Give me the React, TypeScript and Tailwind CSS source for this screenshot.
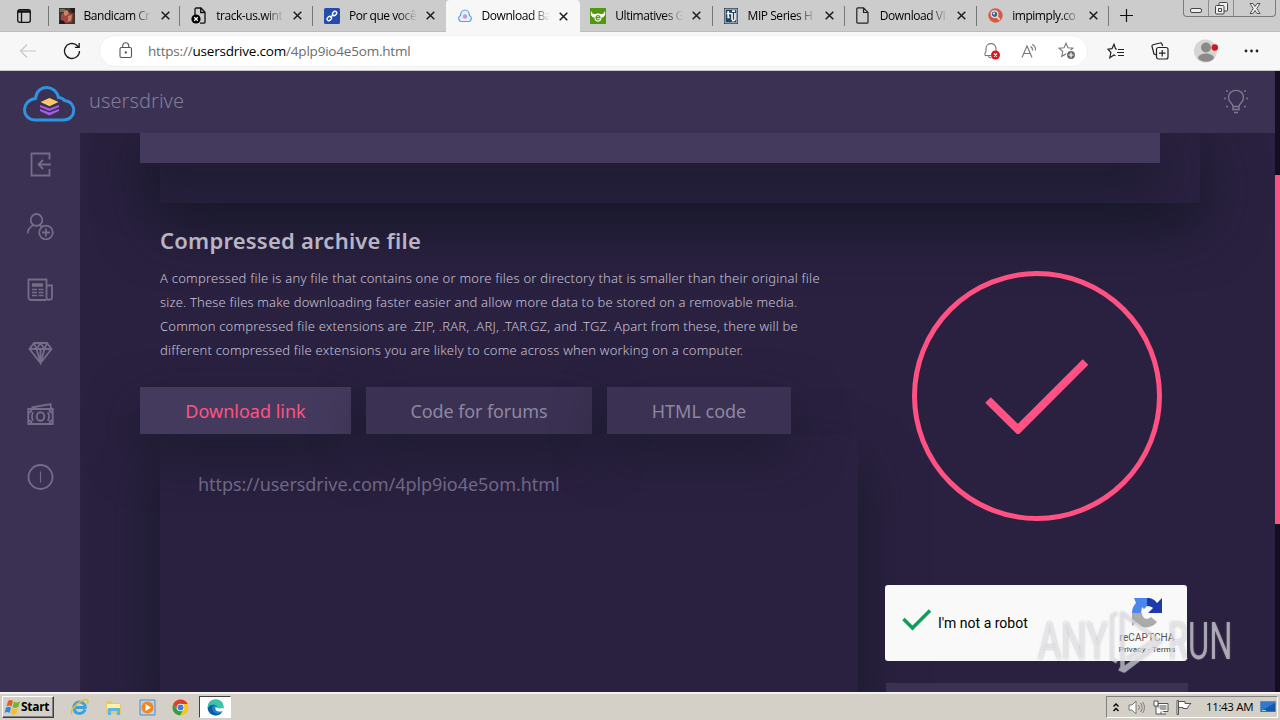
import type { ReactNode } from 'react';

const Close = () => (
  <svg className="shrink-0" width="9" height="9" viewBox="0 0 9 9" fill="none" stroke="#1c1c1c" strokeWidth="1.5">
    <path d="M.7.7l7.6 7.6M8.3.7L.7 8.3" />
  </svg>
);

const icons: Record<string, ReactNode> = {
  bandicam: (
    <svg width="16" height="16" viewBox="0 0 16 16">
      <path fill="#40352b" d="M0 0h16v16H0z" />
      <path fill="#6b7450" d="M1 1h5v3H1z" />
      <path fill="#a5443f" d="M2 7l4-4 4 2 4 1-1 8-6 1-5-3z" />
      <path fill="#c98070" d="M5 3l3-1 2 3-3 3-2-1zM9 8l4-1-1 5-3 2z" />
      <path fill="#1f1c1b" d="M1 12l4 1 1 3H0zM11 0h5v4l-3 1z" />
    </svg>
  ),
  blocked: (
    <svg width="16" height="18" viewBox="0 0 16 18" fill="none" stroke="#111" strokeWidth="1.3">
      <path d="M4 8V2.2C4 1.5 4.500 1 5.200 1H10l4 4.200V15c0 .8-.4 1.200-1.200 1.200H9M9.700 1v4.500H14" />
      <circle cx="5" cy="12" r="4.600" fill="#000" stroke="none" />
      <path stroke="#fff" d="M3.200 10.200l3.600 3.600M6.800 10.200l-3.600 3.600" />
    </svg>
  ),
  link: (
    <svg width="16" height="16" viewBox="0 0 16 16" fill="none" stroke="#fff" strokeWidth="1.300">
      <rect width="16" height="16" rx="1.500" fill="#244cab" stroke="none" />
      <ellipse cx="5.300" cy="10.500" rx="2.500" ry="1.800" transform="rotate(-45 5.300 10.500)" />
      <ellipse cx="10.500" cy="5.500" rx="2.500" ry="1.800" transform="rotate(-45 10.500 5.500)" />
      <path d="M6.300 9.500l3.200-3" />
    </svg>
  ),
  cloud: (
    <svg width="14" height="14" viewBox="0 0 14 14" fill="#e6f0fa" stroke="#5d9fd8" strokeWidth="1.200">
      <path d="M3.200 12.500C.2 12.300-.1 7.500 2.500 6.500 2.600 2.800 5 1 7 1s4.400 1.800 4.500 5.500c2.600 1 2.300 5.800-.7 6z" />
      <circle cx="7" cy="7.500" r="2.200" fill="#c99bc9" stroke="none" />
    </svg>
  ),
  green: (
    <svg width="16" height="16" viewBox="0 0 16 16">
      <path fill="#4f9a0c" d="M0 0h16v16H0z" />
      <path fill="#fff" d="M1 3l1.500 2.500L5 6.300C6 5.200 10 5.200 11 6.300l2.500-.8L15 3l.2 4-2 2.200-1.700.3c.2 2.500-1 4-3.500 4.300-2.500-.3-3.700-1.800-3.500-4.300l-1.700-.3L.8 7z" />
      <path fill="none" stroke="#4f9a0c" strokeWidth="1.200" d="M6 9.700h4c0-2.700-4-2.700-4 0 0 2.300 2.200 2.500 3.700 1.800" />
    </svg>
  ),
  mip: (
    <svg width="14" height="16" viewBox="0 0 14 16" fill="none" stroke="#f5f7f8" strokeWidth="1.700">
      <path fill="#24425a" stroke="none" d="M0 0h14v16H0z" />
      <path strokeWidth=".7" d="M1.200 1.200h11.600v13.600H1.200z" />
      <path d="M4.200 3v6.500h1.500M2.600 5.500h4.500M8 5v7M11 5v6c0 1.500-2 2-3 1.500M8 3.200h3" />
    </svg>
  ),
  file: (
    <svg width="13" height="17" viewBox="0 0 13 17" fill="none" stroke="#222" strokeWidth="1.200">
      <path d="M.8 1.800c0-.6.400-1 1-1H7.500L12 5.500v9.700c0 .6-.4 1-1 1H1.800c-.6 0-1-.4-1-1zM7.500.8v4.700H12" />
    </svg>
  ),
  search: (
    <svg width="15" height="15" viewBox="0 0 15 15">
      <circle cx="7.500" cy="7.500" r="7.200" fill="#d65a45" />
      <circle cx="6.500" cy="6.200" r="3.300" fill="#34668b" stroke="#f4dfdb" strokeWidth="1.200" />
      <path d="M9 8.800l3 3.200" stroke="#f4dfdb" strokeWidth="1.700" />
      <circle cx="6" cy="5.600" r="1" fill="#fff" />
    </svg>
  ),
};

const tabs = [
  { icon: 'bandicam', title: 'Bandicam Cr' },
  { icon: 'blocked', title: 'track-us.wint' },
  { icon: 'link', title: 'Por que você' },
  { icon: 'cloud', title: 'Download Ba', active: true },
  { icon: 'green', title: 'Ultimatives G' },
  { icon: 'mip', title: 'MIP Series H' },
  { icon: 'file', title: 'Download VI' },
  { icon: 'search', title: 'impimply.co' },
];

function TabStrip() {
  return (
    <div className="flex h-8 shrink-0 items-stretch border-b border-[#bdbdbd] bg-[#cccccc]">
      <div className="flex w-[47.500px] items-center justify-center">
        <svg width="14" height="14" viewBox="0 0 14 14" fill="none" stroke="#111" strokeWidth="1.300">
          <rect x=".7" y=".7" width="12.600" height="12.600" rx="2" />
          <path d="M1 2.500h12" strokeWidth="2.500" />
          <path d="M4.500 3v10" />
        </svg>
      </div>
      {tabs.map((t, i) => (
        <div
          key={t.icon}
          className={
            t.active
              ? 'relative z-10 -mb-px flex w-[134.700px] items-center rounded-t-[4px] bg-[#f7f7f7] pl-[11px]'
              : i > 3
                ? 'relative flex w-[132.300px] items-center pl-[10px]'
                : 'relative flex w-[132.700px] items-center pl-[11px]'
          }
        >
          <span className="flex w-[16px] shrink-0 justify-center">{icons[t.icon]}</span>
          <span className="ml-[9px] w-[68px] overflow-hidden whitespace-nowrap text-[12px] tracking-[-0.450px] text-black [mask-image:linear-gradient(90deg,#000_72%,transparent)]">
            {t.title}
          </span>
          <span className="ml-[9px] flex"><Close /></span>
          {!t.active && i !== 2 && <span className="absolute right-0 top-[6px] h-5 w-px bg-[#777]" />}
          {i === 0 && <span className="absolute left-0 top-[6px] h-5 w-px bg-[#777]" />}
        </div>
      ))}
      <svg className="mt-[8px] ml-[10px]" width="15" height="15" viewBox="0 0 15 15" stroke="#111" strokeWidth="1.200">
        <path d="M7.500 1v13M1 7.500h13" />
      </svg>
      <div className="mr-[4px] ml-auto flex h-[17px] w-[93px] rounded-b-[4px] border border-t-0 border-[#7b7b7b]">
        <div className="flex w-[25px] items-center justify-center border-r border-[#8b8b8b]">
          <span className="mt-[5px] h-[5px] w-3 rounded-[2px] border border-[#444] bg-[#eee]" />
        </div>
        <div className="flex w-[25px] items-center justify-center border-r border-[#8b8b8b]">
          <svg width="13" height="13" viewBox="0 0 13 13" fill="#eee" stroke="#444">
            <rect x="4" y=".5" width="8.500" height="8.500" rx="1" />
            <rect x=".5" y="3.500" width="8.500" height="8.500" rx="1" />
            <path d="M3.500 6.500h3v3h-3z" />
          </svg>
        </div>
        <div className="flex flex-1 items-center justify-center">
          <svg width="12" height="11" viewBox="0 0 12 11">
            <path d="M1 .5h3l2 3 2-3h3L7.800 5.500l3.200 5H8l-2-3-2 3H1l3.200-5z" fill="#eee" stroke="#444" strokeWidth=".9" />
          </svg>
        </div>
      </div>
    </div>
  );
}

const starPath = 'M8 1.200l2 4.500 4.900.5-3.700 3.300 1.100 4.800L8 11.900l-4.300 2.400 1.100-4.800L1.100 6.200 6 5.700z';

function Toolbar() {
  return (
    <div className="flex h-[39px] shrink-0 items-center border-b border-[#c9c7cf] bg-[#f7f7f7]">
      <svg className="ml-[19px]" width="18" height="16" viewBox="0 0 18 16" fill="none" stroke="#c6c6c6" strokeWidth="1.200">
        <path d="M17 8H1.500M8 1.500L1.500 8 8 14.500" />
      </svg>
      <svg className="ml-[26px]" width="18" height="18" viewBox="0 0 18 18" fill="none" stroke="#1b1b1b" strokeWidth="1.300">
        <path d="M16.500 9A7.500 7.500 0 1 1 13.500 3l2 2M16.200 1v4.300h-4.300" />
      </svg>
      <div className="ml-[18px] flex h-[32px] w-[989px] items-center rounded-full border border-[#f0f0f0] bg-white pl-[19px]">
        <svg className="-mt-0.5" width="14" height="17" viewBox="0 0 14 17" fill="none" stroke="#555" strokeWidth="1.100">
          <rect x="1" y="5.500" width="11.500" height="10" rx="1.500" />
          <path d="M3.700 5.500V3.800c0-4 6-4 6 0v1.700" />
          <circle cx="6.800" cy="10.500" r=".6" fill="#333" />
        </svg>
        <span className="ml-[15px] whitespace-nowrap text-[13.500px] tracking-[-0.200px] text-[#6d6d6d]">
          https://<span className="text-black">usersdrive.com</span>/4plp9io4e5om.html
        </span>
        <div className="mr-[11px] ml-auto flex items-center gap-[20px]">
          <svg width="18" height="18" viewBox="0 0 18 18" fill="none" stroke="#777" strokeWidth="1.100">
            <path d="M2 13.500V11l1-1.500V6.500c0-6.500 10-6.500 10 0V9M2 13.500h6M5.500 14c.3 1.500 1.700 2 3 1.500" />
            <circle cx="12.500" cy="13" r="4.500" fill="#e5131b" stroke="none" />
            <path stroke="#fff" strokeWidth="1.300" d="M11 11.500l3 3M14 11.500l-3 3" />
          </svg>
          <svg width="17" height="16" viewBox="0 0 17 16" fill="none" stroke="#777" strokeWidth="1.100">
            <path d="M1 14.500L6 3l5 11.500M2.800 10.500h6.500M9.500 3.500c1.500.8 2.200 2 2 4M11 1.500c2.800 1 3.800 3.500 3.300 6" />
          </svg>
          <svg width="18" height="18" viewBox="0 0 18 18" fill="none" stroke="#777" strokeWidth="1.100">
            <path d={starPath} />
            <circle cx="13" cy="13" r="4.500" fill="#666" stroke="#fff" />
            <path stroke="#fff" strokeWidth="1.200" d="M13 10.500v5M10.500 13h5" />
          </svg>
        </div>
      </div>
      <svg className="ml-[19px]" width="18" height="17" viewBox="0 0 18 17" fill="none" stroke="#222" strokeWidth="1.200">
        <path d="M10 6.200L8.500 5.700 7 1.200 5 5.700.9 6.200l3 3.300-1.100 5.300L7 12l1.500.7M11 6.500h6M10 9.500h7M11 12.500h6" />
      </svg>
      <svg className="ml-[26px]" width="18" height="18" viewBox="0 0 18 18" fill="none" stroke="#222" strokeWidth="1.200">
        <rect x="5.500" y="5.500" width="11.500" height="11.500" rx="2" />
        <path d="M11.200 8v6.500M8 11.200h6.500M5.500 13L3 12 1 4.500C.8 3.500 1.200 3 2 2.700L9 1c1-.3 1.700.2 2 1l.6 2" />
      </svg>
      <svg className="ml-[25px]" width="24" height="24" viewBox="0 0 24 24">
        <circle cx="11.500" cy="12" r="11.500" fill="#d7d5d3" />
        <circle cx="12" cy="8.500" r="5" fill="#8c8a88" />
        <path d="M4 19c1-6 15-6 16 0-3 5-13 5-16 0z" fill="#8c8a88" />
        <circle cx="20.800" cy="8.500" r="3.200" fill="#d8141e" />
      </svg>
      <svg className="ml-[26px]" width="15" height="4" viewBox="0 0 15 4" fill="#222">
        <circle cx="2" cy="2" r="1.400" />
        <circle cx="7.500" cy="2" r="1.400" />
        <circle cx="13" cy="2" r="1.400" />
      </svg>
    </div>
  );
}

function SiteHeader() {
  return (
    <header className="relative z-10 flex h-[62px] w-[1275px] shrink-0 items-center bg-[#3b3152] pl-[22px]">
      <svg className="mt-[3px]" width="54" height="38" viewBox="0 0 54 38" fill="none">
        <path
          d="M12.500 35h29C54.500 35 55.500 17 42.500 15.500 40.500 13 38.500 12.500 36.500 12.500 34-.5 15-1.500 13.500 13.500-1 15.500-1 34 12.500 35z"
          stroke="#2f93e2"
          strokeWidth="3"
        />
        <path d="M18 26l9.500 4.500L37 26v-2l-9.500 3.500L18 24zM18 22l9.500 4L37 22v-2L27.500 23.500 18 20z" fill="#a85be6" />
        <path d="M18.500 17l9-4 9 4-9 4.200z" fill="#ffc861" />
      </svg>
      <span className="-mt-0.5 ml-[13px] font-['Noto_Sans','Open_Sans',sans-serif] text-[20px] font-light tracking-[0.060px] text-[#857d98]">usersdrive</span>
      <svg className="-mt-0.5 mr-[26px] ml-auto" width="26" height="26" viewBox="0 0 26 26" fill="none" stroke="#81798f" strokeWidth="1.400">
        <path d="M10 18.500c0-3-4.500-4-4.500-9 0-9.500 15-9.500 15 0 0 5-4.500 6-4.500 9zM10 21.500h6M11 24.500h4M10 18v4.500M16 18v4.500" />
        <g fill="#81798f" stroke="none">
          <circle cx="2" cy="10.500" r="1" />
          <circle cx="24" cy="10.500" r="1" />
          <circle cx="4" cy="3" r="1" />
          <circle cx="22" cy="3" r="1" />
          <circle cx="4" cy="18.500" r="1" />
          <circle cx="22" cy="18.500" r="1" />
        </g>
      </svg>
    </header>
  );
}

const sideIcons: ReactNode[] = [
  <path d="M22 8V2H4v22h18v-6.500M23.500 13h-12M15.500 8.500L11 13l4.500 4.500" />,
  <>
    <ellipse cx="9" cy="6.500" rx="5.800" ry="6" />
    <path d="M0 20c.5-5 3-7 6.500-8.500M12 11.500l3 2" />
    <circle cx="18.500" cy="19" r="6.800" />
    <path d="M18.500 15v8M14.500 19h8" />
  </>,
  <>
    <path d="M19 23.500H4C2 23.500 1 22.500 1 21V3h18v18c0 3 5.500 3 5.500 0V9H19" />
    <path d="M4.500 8.500H15.500" strokeWidth="3.500" />
    <path d="M4.500 13h5M11 13h5M4.500 16h5M11 16h5M4.500 19h5M11 19h5" strokeWidth="1.700" />
  </>,
  <path d="M6.500 4.500h13l4.500 6L13 24.500 2 10.500zM2 10.500h22M6.500 4.500L9 10.500l4 14 4-14 2.500-6M9 10.500l4-6 4 6M13 10.500v14" />,
  <>
    <path d="M.8 7.500h24.400v15H.8zM4 6l19-3.500.5 4" strokeWidth="1.900" />
    <ellipse cx="13" cy="15" rx="3.800" ry="4.200" strokeWidth="2" />
    <path d="M1 11c2 0 3-1 3-3M25 11c-2 0-3-1-3-3M1 19c2 0 3 1 3 3M25 19c-2 0-3 1-3 3M6 11c-2 1-2 7 0 8M20 11c2 1 2 7 0 8" />
  </>,
  <>
    <circle cx="13" cy="13.500" r="12" />
    <path d="M13 8v11" strokeWidth="1.100" />
  </>,
];

function Sidebar() {
  return (
    <aside className="z-10 flex w-20 shrink-0 flex-col items-center bg-[#3b3152]">
      {sideIcons.map((g, i) => (
        <div key={i} className="flex h-[62.500px] w-full items-center justify-center">
          <svg width="27" height="27" viewBox="-.5 -.5 27 27" fill="none" stroke="#756c89" strokeWidth="1.800">{g}</svg>
        </div>
      ))}
    </aside>
  );
}

const paragraph = [
  { text: 'A compressed file is any file that contains one or more files or directory that is smaller than their original file', cls: 'tracking-[0.235px]' },
  { text: 'size. These files make downloading faster easier and allow more data to be stored on a removable media.', cls: 'tracking-[0.180px]' },
  { text: 'Common compressed file extensions are .ZIP, .RAR, .ARJ, .TAR.GZ, and .TGZ. Apart from these, there will be', cls: 'tracking-[0.190px]' },
  { text: 'different compressed file extensions you are likely to come across when working on a computer.', cls: 'tracking-[0.210px]' },
];

function FileInfo() {
  return (
    <section className="flex w-[698px] flex-col font-['Noto_Sans','Open_Sans',sans-serif]">
      <h2 className="mt-[21px] h-8 text-[22px] leading-8 font-semibold tracking-[0.220px] whitespace-nowrap text-[#b9b4c4]">Compressed archive file</h2>
      <div className="mt-[10px] text-[13px] leading-6 font-light text-[#c6c1d3]">
        {paragraph.map((l) => (
          <p key={l.text} className={`whitespace-nowrap ${l.cls}`}>{l.text}</p>
        ))}
      </div>
      <div className="relative z-10 mt-[25px] -ml-5 flex h-[47px] shrink-0 gap-[15px] text-[18px]">
        <button className="w-[211px] bg-[#443a5d] pt-[2px] text-[#ff5283] shadow-[0_20px_50px_rgba(20,24,36,0.600)]">Download link</button>
        <button className="relative w-[226px] bg-[#3b3152] pt-[2px] tracking-[-0.100px] text-[#8e87a1] shadow-[0_20px_50px_rgba(20,24,36,0.550)]">Code for forums</button>
        <button className="relative w-[184px] bg-[#3b3152] pt-[2px] text-[#8e87a1] shadow-[0_20px_50px_rgba(20,24,36,0.550)]">HTML code</button>
      </div>
      <div className="flex-1 bg-[#2a2140] pt-[36px] pl-[38px] shadow-[0_30px_50px_rgba(20,24,36,0.800)]">
        <span className="relative z-20 text-[18px] leading-7 tracking-[-0.050px] text-[#6f6783]">https://usersdrive.com/4plp9io4e5om.html</span>
      </div>
    </section>
  );
}

function Captcha() {
  return (
    <div className="relative mt-[64px] flex h-[76px] w-full shrink-0 items-center rounded-[3px] bg-[#f9f9f9] pl-[17px] font-[Roboto,sans-serif]">
      <svg className="-mt-1.5" width="30" height="24" viewBox="0 0 30 24" fill="none" stroke="#0f9d58" strokeWidth="3.500">
        <path d="M1.500 11l9 9L28 2.500" />
      </svg>
      <span className="ml-[6px] text-[14px] text-black">I'm not a robot</span>
      <div className="mr-[6px] ml-auto flex w-[68px] flex-col items-center pt-[7px] text-[#555]">
        <svg width="32" height="32" viewBox="0 0 32 32">
          <path d="M1 16C1 11 3 8 5 6L3 1h13v8l-3 3-2-2-1 6z" fill="#4a86ec" />
          <path d="M16 1c5 0 8 2 10 5l5-5v15H17l5-5c-1-1-3-2-6-2z" fill="#1c3aa9" />
          <path d="M1 16h10c0 5 5 8 9 4l6 5C21 32 10 32 5 26l-4 3z" fill="#ababab" />
        </svg>
        <span className="mt-[2px] text-[10px] leading-[13px] tracking-[0.100px]">reCAPTCHA</span>
        <span className="text-[8px] leading-[12px] tracking-[0.150px] whitespace-nowrap text-[#333]">Privacy - Terms</span>
      </div>
    </div>
  );
}

function Watermark() {
  return (
    <div className="absolute top-[605px] left-[1038px] z-30 flex h-[72px] w-[196px] items-center font-['Roboto',sans-serif] text-[51px] leading-none text-white/55 [text-shadow:0_0_3px_rgba(110,105,120,0.500)]">
      <span className="w-[70px] shrink-0 origin-left scale-x-[0.700] whitespace-nowrap">ANY</span>
      <svg className="shrink-0 drop-shadow-[0_0_1px_rgba(110,105,120,0.500)]" width="60" height="66" viewBox="0 0 60 66" fill="none" stroke="rgba(232,231,236,.6)" strokeWidth="3.500" strokeLinejoin="round">
        <path d="M9 5L4 8v43l5 3M14 5l38 29-37 27zM14 5v56M19 51L46 32M11 61l5 2 33-25" />
      </svg>
      <span className="origin-left scale-x-[0.640] whitespace-nowrap">RUN</span>
    </div>
  );
}

function Taskbar() {
  return (
    <footer className="z-40 flex h-[28px] shrink-0 items-center border-t-2 border-[#f4f2ee] bg-[#d4d0c8]">
      <div className="ml-[2px] flex h-[22px] w-[52px] items-center border border-t-white border-r-[#404040] border-b-[#404040] border-l-white pl-[1px] shadow-[inset_-1px_-1px_#808080]">
        <svg width="17" height="16" viewBox="0 0 17 16">
          <path d="M4 2c2-1.500 3-1.500 5 0L7.500 7.500c-2-1.500-3.500-1-5 0z" fill="#e35d26" />
          <path d="M10 2.500c2 1.300 4 1.300 6-.2l-1.500 5.500c-2 1.500-4 1.500-6 .2z" fill="#75b52e" />
          <path d="M2 8.700c2-1.300 3.500-1.300 5 0L5.700 14c-2-1.500-3.500-1-5.200 0z" fill="#2e8bd2" />
          <path d="M8.200 9c2 1.300 3.500 1.300 5.800.2L12.500 14.500c-2 1.300-4 1.300-5.800 0z" fill="#f6bf24" />
        </svg>
        <span className="text-[12px] font-bold tracking-[-0.300px] text-black">Start</span>
      </div>
      <svg className="ml-[16px]" width="19" height="18" viewBox="0 0 19 18" fill="none">
        <path d="M15 11.500c-1.500 5.500-11 5.500-11-2s11-7 11.200 0H5" stroke="#3ba1df" strokeWidth="3" />
        <path d="M2 16C-1 12 13-1 17.500 2c1 .8.500 2.500-.3 4" stroke="#e8bd35" strokeWidth="1.600" />
      </svg>
      <svg className="ml-[16px]" width="17" height="17" viewBox="0 0 17 17">
        <path d="M1 2h6l1 2h8v11H1z" fill="#e9c866" />
        <path d="M2 5h13v5H2z" fill="#fff0b0" />
        <path d="M3 16v-7h12v7h-3v-4H6v4z" fill="#60b4e0" />
      </svg>
      <svg className="ml-[17px]" width="17" height="17" viewBox="0 0 17 17">
        <path d="M1 1h15v15H1z" fill="#b6d4ed" stroke="#5689b7" />
        <circle cx="8.500" cy="8.500" r="6" fill="#f4861f" />
        <path d="M6.500 5l5.500 3.500L6.500 12z" fill="#fff" />
      </svg>
      <svg className="ml-[16px]" width="17" height="17" viewBox="0 0 17 17">
        <circle cx="8.500" cy="8.500" r="8" fill="#f9c51b" />
        <path d="M1.300 5a8 8 0 0 1 14.400 0H8.500L5 10z" fill="#df3d2f" />
        <path d="M1.300 5A8 8 0 0 0 8 16.500l3.500-6-6.500 0z" fill="#2f9e4b" />
        <circle cx="8.500" cy="8.500" r="3.800" fill="#fff" />
        <circle cx="8.500" cy="8.500" r="3" fill="#397fe6" />
      </svg>
      <div className="ml-[10px] flex h-[22px] w-[32px] items-center justify-center border border-t-[#404040] border-r-white border-b-white border-l-[#404040] bg-white">
        <svg width="17" height="17" viewBox="0 0 17 17">
          <circle cx="8.500" cy="8.500" r="8" fill="#1685ce" />
          <path d="M1 6C4-2 17-1 16.500 8c-.5 3-4 4-6.500 2.500 1-2 .5-4-2-4.500C5 5.500 2 6 1 9z" fill="#3cc6a5" />
          <path d="M5 8c0 6 5 8 9.500 6C11 18 2 17 1 9c1-3 5-4 7-3-2 .3-3 1-3 2z" fill="#16579f" />
          <path d="M8.500 8c-1 4 3 5.500 7.500 4v-3l-4 .5z" fill="#fff" />
        </svg>
      </div>
      <div className="mr-[2px] ml-auto flex h-[22px] w-[172px] items-center border border-t-[#808080] border-r-white border-b-white border-l-[#808080] pl-[6px] text-[11px] text-black">
        <svg width="6" height="9" viewBox="0 0 6 9" fill="none" stroke="#000" strokeWidth="1.400">
          <path d="M.5 3.500L3 1l2.500 2.500M.5 8L3 5.500 5.500 8" />
        </svg>
        <svg className="ml-[9px]" width="17" height="15" viewBox="0 0 17 15" fill="none" stroke="#777">
          <path d="M1 5h3l4-4v13l-4-4H1z" fill="#fff" />
          <path d="M10.500 5c1 1.500 1 3.500 0 5M12.500 3c2 2.500 2 6.500 0 9M14.500 2c2.500 3 2.500 8 0 11" />
        </svg>
        <svg className="ml-[8px]" width="16" height="15" viewBox="0 0 16 15" fill="#fff" stroke="#555">
          <path d="M5 3.500h10v8H5z" />
          <path d="M6.500 5h7v5h-7z" fill="#a3a3a3" stroke="none" />
          <path d="M1 1h4v5H1zM3 6v8h10M8 14v-2.500" />
        </svg>
        <svg className="ml-[7px]" width="16" height="15" viewBox="0 0 16 15" fill="#fff" stroke="#555">
          <path d="M1 .5h1.500v14H1zM2.500 1.500H9v2h6L12.500 6l-1 2.500H7v-1H2.500z" />
        </svg>
        <span className="ml-[14px] text-[11.500px] tracking-[-0.350px] whitespace-nowrap">11:43 AM</span>
        <svg className="mr-px ml-auto" width="16" height="12" viewBox="0 0 16 12">
          <path d="M.5.500h15v10H.5z" fill="#3179ca" stroke="#5e8bbf" />
          <path d="M1 10L15 2v8.500H1z" fill="#1757a6" />
          <path d="M2 9h4v1H2z" fill="#8ce0e8" />
        </svg>
      </div>
    </footer>
  );
}

export default function App() {
  return (
    <div className="relative flex h-[720px] w-[1280px] flex-col overflow-hidden bg-[#2a2140] font-['Open_Sans','Noto_Sans',sans-serif]">
      <TabStrip />
      <Toolbar />
      <div className="flex min-h-0 flex-1">
        <div className="flex w-[1275px] flex-col">
          <SiteHeader />
          <div className="flex min-h-0 flex-1">
            <Sidebar />
            <main className="flex flex-1 flex-col overflow-hidden bg-[#2a2140] pl-20">
              <div className="h-[70px] w-[1040px] shrink-0 bg-[#2a2140] shadow-[0_20px_60px_rgba(20,24,36,0.850)]">
                <div className="-ml-5 h-[30px] w-[1020px] bg-[#443a5d] shadow-[0_20px_50px_rgba(20,24,36,0.850)]" />
              </div>
              <div className="flex min-h-0 flex-1">
                <FileInfo />
                <aside className="ml-[27px] flex w-[302px] flex-col items-center">
                  <div className="mt-[68px] ml-[2px] flex h-[250px] w-[250px] shrink-0 items-center justify-center rounded-full border-[5px] border-[#ff5283]">
                    <svg width="104" height="76" viewBox="0 0 104 76" fill="none" stroke="#ff5283" strokeWidth="8">
                      <path d="M3 42l30 29.500L100.500 4" />
                    </svg>
                  </div>
                  <Captcha />
                  <div className="mt-[22px] ml-[2px] h-[50px] w-full shrink-0 bg-[#3b3152]" />
                </aside>
              </div>
            </main>
          </div>
        </div>
        <div className="w-[5px] bg-[#130e20] pt-[104px]">
          <div className="h-[349px] bg-[#ff5283]" />
        </div>
      </div>
      <Watermark />
      <Taskbar />
    </div>
  );
}
